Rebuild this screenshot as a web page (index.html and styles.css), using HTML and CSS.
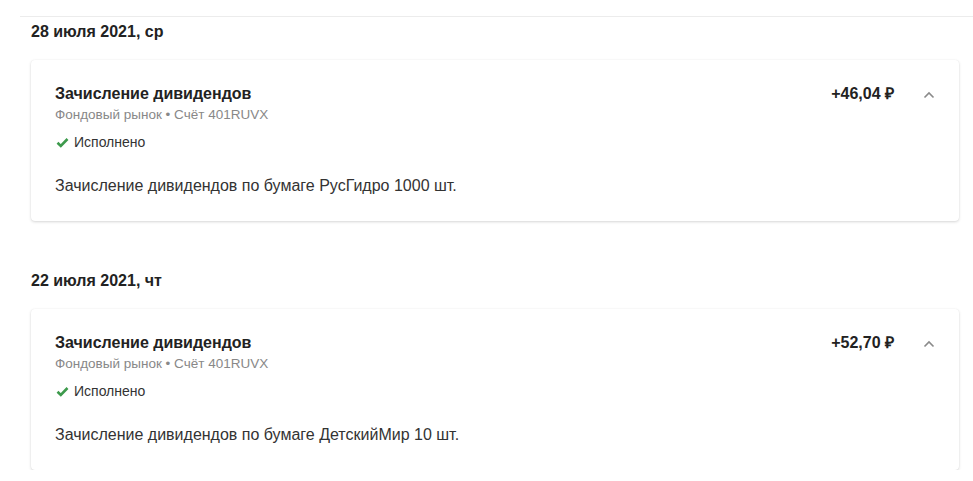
FILE: index.html
```html
<!DOCTYPE html>
<html lang="ru">
<head>
<meta charset="utf-8">
<link rel="stylesheet" href="styles.css">
</head>
<body>
<div class="feed">
  <section class="day">
    <h2 class="day-title">28 июля 2021, ср</h2>
    <div class="card">
      <div class="card-head">
        <div class="card-info">
          <div class="op-title">Зачисление дивидендов</div>
          <div class="op-sub">Фондовый рынок • Счёт 401RUVX</div>
        </div>
        <div class="op-amount">+46,04 ₽</div>
        <svg class="chev" width="12" height="8" viewBox="0 0 12 8"><path d="M1.5 6.5 L6 2 L10.5 6.5" fill="none" stroke="#8a8a8a" stroke-width="1.6"/></svg>
      </div>
      <div class="op-status"><svg class="check" width="13" height="11" viewBox="0 0 13 11"><path d="M1.5 5.8 L4.8 9 L11.5 2" fill="none" stroke="#3d9a4c" stroke-width="2.6"/></svg>Исполнено</div>
      <div class="op-desc">Зачисление дивидендов по бумаге РусГидро 1000 шт.</div>
    </div>
  </section>
  <section class="day">
    <h2 class="day-title">22 июля 2021, чт</h2>
    <div class="card">
      <div class="card-head">
        <div class="card-info">
          <div class="op-title">Зачисление дивидендов</div>
          <div class="op-sub">Фондовый рынок • Счёт 401RUVX</div>
        </div>
        <div class="op-amount">+52,70 ₽</div>
        <svg class="chev" width="12" height="8" viewBox="0 0 12 8"><path d="M1.5 6.5 L6 2 L10.5 6.5" fill="none" stroke="#8a8a8a" stroke-width="1.6"/></svg>
      </div>
      <div class="op-status"><svg class="check" width="13" height="11" viewBox="0 0 13 11"><path d="M1.5 5.8 L4.8 9 L11.5 2" fill="none" stroke="#3d9a4c" stroke-width="2.6"/></svg>Исполнено</div>
      <div class="op-desc">Зачисление дивидендов по бумаге ДетскийМир 10 шт.</div>
    </div>
  </section>
</div>
</body>
</html>
```

FILE: styles.css
```css
html, body {
  margin: 0;
  padding: 0;
  background: #fff;
  font-family: "Liberation Sans", Arial, sans-serif;
  color: #333;
}
.feed {
  margin: 16px 0 0 20px;
  border-top: 1px solid #ececec;
  padding: 0 14px 0 11px;
}
.day-title {
  margin: 5px 0 18px;
  font-size: 16px;
  line-height: 20px;
  font-weight: bold;
  color: #222;
}
.day + .day .day-title {
  margin-top: 50px;
}
.card {
  background: #fff;
  border-radius: 4px;
  box-shadow: 0 1px 3px rgba(0,0,0,0.16), 0 0 1px rgba(0,0,0,0.08);
  padding: 24px 24px 25px 24px;
}
.card-head {
  display: flex;
  align-items: flex-start;
}
.card-info {
  flex: 1;
}
.op-title {
  font-size: 16px;
  line-height: 20px;
  font-weight: bold;
  color: #222;
}
.op-sub {
  margin-top: 3px;
  font-size: 13.5px;
  line-height: 16px;
  color: #888;
}
.op-amount {
  font-size: 16px;
  line-height: 20px;
  font-weight: bold;
  color: #222;
}
.chev {
  margin: 7px 0 0 29px;
  flex: none;
}
.op-status {
  margin-top: 10px;
  display: flex;
  align-items: center;
  gap: 5px;
  font-size: 14px;
  line-height: 18px;
  color: #333;
}
.check {
  flex: none;
  margin-left: 1px;
}
.op-desc {
  margin-top: 25px;
  font-size: 16px;
  line-height: 20px;
  color: #333;
}
```
